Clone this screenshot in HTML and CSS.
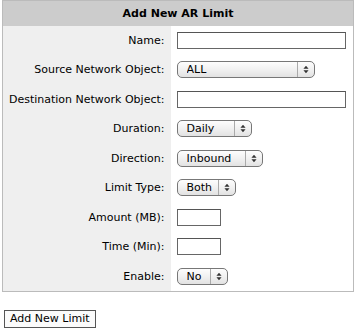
FILE: index.html
```html
<!DOCTYPE html>
<html lang="en">
<head>
    <meta charset="UTF-8">
    <title>Add New AR Limit</title>
    <link rel="stylesheet" href="styles.css">
</head>
<body>
    <form class="limit-form">
        <table class="limit-table">
            <tr>
                <th colspan="2" class="table-head">Add New AR Limit</th>
            </tr>
            <tr>
                <td class="label">Name:</td>
                <td class="field"><input type="text" class="text-input wide"></td>
            </tr>
            <tr>
                <td class="label">Source Network Object:</td>
                <td class="field">
                    <span class="select sel-all"><select><option>ALL</option></select><span class="arrows"><svg viewBox="0 0 7 10"><path d="M3.5 0.5L6.5 4H0.5z M3.5 9.5L6.5 6H0.5z"/></svg></span></span>
                </td>
            </tr>
            <tr>
                <td class="label">Destination Network Object:</td>
                <td class="field"><input type="text" class="text-input wide"></td>
            </tr>
            <tr>
                <td class="label">Duration:</td>
                <td class="field">
                    <span class="select sel-daily"><select><option>Daily</option></select><span class="arrows"><svg viewBox="0 0 7 10"><path d="M3.5 0.5L6.5 4H0.5z M3.5 9.5L6.5 6H0.5z"/></svg></span></span>
                </td>
            </tr>
            <tr>
                <td class="label">Direction:</td>
                <td class="field">
                    <span class="select sel-inbound"><select><option>Inbound</option></select><span class="arrows"><svg viewBox="0 0 7 10"><path d="M3.5 0.5L6.5 4H0.5z M3.5 9.5L6.5 6H0.5z"/></svg></span></span>
                </td>
            </tr>
            <tr>
                <td class="label">Limit Type:</td>
                <td class="field">
                    <span class="select sel-both"><select><option>Both</option></select><span class="arrows"><svg viewBox="0 0 7 10"><path d="M3.5 0.5L6.5 4H0.5z M3.5 9.5L6.5 6H0.5z"/></svg></span></span>
                </td>
            </tr>
            <tr>
                <td class="label">Amount (MB):</td>
                <td class="field"><input type="text" class="text-input short"></td>
            </tr>
            <tr>
                <td class="label">Time (Min):</td>
                <td class="field"><input type="text" class="text-input short"></td>
            </tr>
            <tr>
                <td class="label">Enable:</td>
                <td class="field">
                    <span class="select sel-no"><select><option>No</option></select><span class="arrows"><svg viewBox="0 0 7 10"><path d="M3.5 0.5L6.5 4H0.5z M3.5 9.5L6.5 6H0.5z"/></svg></span></span>
                </td>
            </tr>
        </table>
        <button type="button" class="add-btn">Add New Limit</button>
    </form>
</body>
</html>
```

FILE: styles.css
```css
* {
    box-sizing: border-box;
}

body {
    margin: 0;
    padding: 0 0 0 2px;
    background: #fff;
    font-family: "DejaVu Sans", Verdana, sans-serif;
    font-size: 11px;
    color: #000;
}

.limit-table {
    width: 352px;
    border-collapse: collapse;
    border: 1px solid #bbb;
}

.table-head {
    height: 25px;
    background: #ccc;
    font-size: 11px;
    font-weight: bold;
    text-align: center;
    padding: 0;
}

.limit-table td {
    height: 29.5px;
    padding: 0;
    vertical-align: middle;
}

.label {
    width: 168px;
    background: #efefef;
    text-align: right;
    padding-right: 6px !important;
    white-space: nowrap;
}

.field {
    background: #fff;
    padding-left: 6px !important;
}

.text-input {
    display: block;
    height: 17px;
    border: 1px solid #666;
    border-top-color: #555;
    padding: 0 2px;
    font: inherit;
    background: #fff;
}

.text-input.wide {
    width: 169px;
}

.text-input.short {
    width: 44px;
}

.select {
    display: flex;
    align-items: stretch;
    height: 17px;
    border: 1px solid #777;
    border-radius: 5px;
    background: linear-gradient(to bottom, #fdfdfd 0%, #f1f1f1 50%, #e2e2e2 100%);
    overflow: hidden;
}

.select select {
    flex: 1;
    min-width: 0;
    appearance: none;
    -webkit-appearance: none;
    border: none;
    background: transparent;
    font: inherit;
    font-size: 11px;
    color: #000;
    padding: 0 0 0 9px;
    margin: 0;
    outline: none;
}

.arrows {
    width: 17px;
    border-left: 1px solid #aaa;
    display: flex;
    align-items: center;
    justify-content: center;
}

.arrows svg {
    width: 6px;
    height: 9px;
    fill: #333;
}

.sel-all { width: 138px; }
.sel-daily { width: 75px; }
.sel-inbound { width: 86px; }
.sel-both { width: 59px; }
.sel-no { width: 51px; }

.add-btn {
    margin: 18px 0 0 2px;
    height: 18px;
    padding: 0 5px;
    border: 1px solid #555;
    background: #fbfbfb;
    font: inherit;
    font-size: 11px;
    color: #000;
}
```
